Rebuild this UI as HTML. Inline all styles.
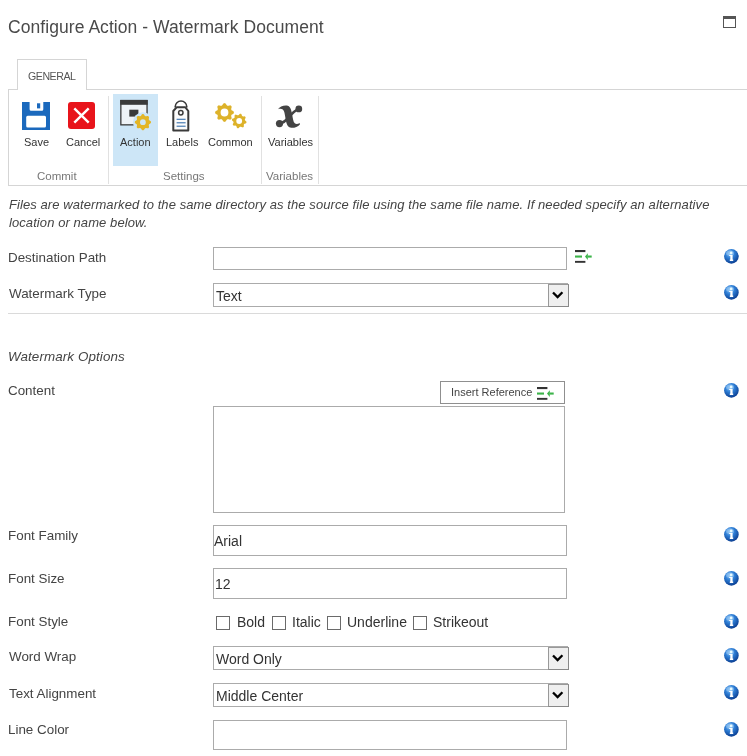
<!DOCTYPE html>
<html><head><meta charset="utf-8">
<style>
html,body{margin:0;padding:0;background:#fff;width:747px;height:756px;overflow:hidden;position:relative;font-family:"Liberation Sans",sans-serif;color:#444}
.a{position:absolute;white-space:nowrap;will-change:transform}
.t13{font-size:13.4px;line-height:13px}
.t11{font-size:11px;line-height:11px}
.t14{font-size:14px;line-height:14px}
.box{position:absolute;border:1px solid #ababab;background:#fff;box-sizing:border-box}
.info{position:absolute;left:724px;width:15px;height:15px}
.dd{position:absolute;left:548px;width:20.5px;height:23px;box-sizing:border-box;background:#efefef;border:1.5px solid #999;border-right:1.5px solid #888;border-bottom:1.5px solid #888}
.cb{position:absolute;top:616px;width:14px;height:14px;box-sizing:border-box;border:1px solid #6a6a6a;background:#fff}
</style></head><body>
<svg width="0" height="0" style="position:absolute">
<defs>
<radialGradient id="ig" cx="40%" cy="30%" r="70%">
<stop offset="0" stop-color="#8cc4f4"/><stop offset="0.45" stop-color="#2f7fd6"/><stop offset="1" stop-color="#0b3f93"/>
</radialGradient>
<symbol id="info" viewBox="0 0 15 15">
<circle cx="7.4" cy="7.4" r="7.3" fill="url(#ig)"/>
<ellipse cx="6" cy="4.2" rx="4" ry="2.6" fill="#bfe2ff" opacity="0.35"/>
<circle cx="7.2" cy="3.9" r="1.35" fill="#e8fbff"/>
<path d="M5.2 5.9H8.6V10.5H9.2V11.9H5.8V10.5H6.3V7H5.2Z" fill="#fff"/>
</symbol>
<symbol id="ref" viewBox="0 0 17 13">
<rect x="0" y="0" width="10.4" height="2.1" fill="#333"/>
<rect x="0" y="5.5" width="7" height="2.1" fill="#3cb44a"/>
<path d="M10 6.55L12.8 3.2V9.9Z" fill="#3cb44a"/>
<rect x="12.6" y="5.5" width="4.1" height="2.1" fill="#3cb44a"/>
<rect x="0" y="10.9" width="10.4" height="1.9" fill="#333"/>
</symbol>
<symbol id="chev" viewBox="0 0 14 10">
<path d="M2 2.5L6.6 7.1L11.4 2.3" stroke="#000" stroke-width="2.3" fill="none" stroke-linejoin="miter" stroke-miterlimit="4"/>
</symbol>
</defs>
</svg>

<!-- Title -->
<div class="a" style="left:8.4px;top:18.6px;font-size:17.5px;line-height:17.5px;letter-spacing:0.06px;color:#4a4a4a">Configure Action - Watermark Document</div>
<!-- maximize icon -->
<div class="a" style="left:723px;top:15.5px;width:13px;height:11.5px;box-sizing:border-box;border:1px solid #555;border-top:3px solid #555"></div>

<!-- Tab -->
<div class="a" style="left:17px;top:59px;width:70px;height:31px;box-sizing:border-box;border:1px solid #d5d5d5;border-bottom:none;background:#fff;z-index:2"></div>
<div class="a" style="left:28.3px;top:71px;font-size:10.6px;line-height:10.6px;letter-spacing:-0.45px;color:#555;z-index:3">GENERAL</div>

<!-- Ribbon -->
<div class="a" style="left:8px;top:89px;width:739px;height:97px;box-sizing:border-box;border:1px solid #d5d5d5;border-right:none"></div>
<div class="a" style="left:108px;top:96px;width:1px;height:88px;background:#e1e1e1"></div>
<div class="a" style="left:261px;top:96px;width:1px;height:88px;background:#e1e1e1"></div>
<div class="a" style="left:318px;top:96px;width:1px;height:88px;background:#e1e1e1"></div>
<div class="a" style="left:113px;top:94px;width:45px;height:72px;background:#cde6f7"></div>

<!-- Save icon -->
<svg class="a" style="left:22px;top:102px" width="28" height="28" viewBox="0 0 28 28">
<path fill="#1b69bd" fill-rule="evenodd" d="M0 0H28V28H0Z M7.6 0H21.3V7.3a1.5 1.5 0 0 1 -1.5 1.5H9.1a1.5 1.5 0 0 1 -1.5 -1.5Z M5.7 13.8H22.5a1.5 1.5 0 0 1 1.5 1.5V24.1a1.5 1.5 0 0 1 -1.5 1.5H5.7a1.5 1.5 0 0 1 -1.5 -1.5V15.3a1.5 1.5 0 0 1 1.5 -1.5Z"/>
<rect x="15" y="1.3" width="3.2" height="5.1" fill="#1b69bd"/>
</svg>
<!-- Cancel icon -->
<svg class="a" style="left:68px;top:102px" width="27" height="27" viewBox="0 0 27 27">
<rect x="0" y="0" width="27" height="27" rx="3" fill="#e8141b"/>
<path d="M6.3 6.3L20.7 20.7M20.7 6.3L6.3 20.7" stroke="#fff" stroke-width="2.4"/>
</svg>
<!-- Action icon -->
<svg class="a" style="left:118px;top:98px" width="36" height="36" viewBox="0 0 36 36">
<rect x="2.85" y="2.5" width="26.2" height="24.35" fill="#eef3f7" stroke="#3a3a3a" stroke-width="1.3"/>
<rect x="2.2" y="2" width="27.5" height="4.8" fill="#3a3a3a"/>
<rect x="11.3" y="11.7" width="9.1" height="6.9" fill="#3a3a3a"/>
<circle cx="24.9" cy="24.2" r="10" fill="#cde6f7"/>
<path fill="#e3b526" fill-rule="evenodd" d="M24.90 16.10 L25.18 16.12 L25.46 16.19 L25.73 16.33 L25.98 16.54 L26.20 16.83 L26.40 17.17 L26.58 17.48 L26.75 17.74 L26.94 17.93 L27.13 18.07 L27.34 18.17 L27.55 18.25 L27.77 18.31 L28.02 18.33 L28.31 18.30 L28.64 18.22 L29.00 18.12 L29.38 18.04 L29.72 18.03 L30.03 18.09 L30.29 18.21 L30.52 18.38 L30.72 18.58 L30.89 18.81 L31.01 19.07 L31.07 19.38 L31.06 19.72 L30.98 20.10 L30.88 20.46 L30.80 20.79 L30.77 21.08 L30.79 21.33 L30.85 21.55 L30.93 21.76 L31.03 21.97 L31.17 22.16 L31.36 22.35 L31.62 22.52 L31.93 22.70 L32.27 22.90 L32.56 23.12 L32.77 23.37 L32.91 23.64 L32.98 23.92 L33.00 24.20 L32.98 24.48 L32.91 24.76 L32.77 25.03 L32.56 25.28 L32.27 25.50 L31.93 25.70 L31.62 25.88 L31.36 26.05 L31.17 26.24 L31.03 26.43 L30.93 26.64 L30.85 26.85 L30.79 27.07 L30.77 27.32 L30.80 27.61 L30.88 27.94 L30.98 28.30 L31.06 28.68 L31.07 29.02 L31.01 29.33 L30.89 29.59 L30.72 29.82 L30.52 30.02 L30.29 30.19 L30.03 30.31 L29.72 30.37 L29.38 30.36 L29.00 30.28 L28.64 30.18 L28.31 30.10 L28.02 30.07 L27.77 30.09 L27.55 30.15 L27.34 30.23 L27.13 30.33 L26.94 30.47 L26.75 30.66 L26.58 30.92 L26.40 31.23 L26.20 31.57 L25.98 31.86 L25.73 32.07 L25.46 32.21 L25.18 32.28 L24.90 32.30 L24.62 32.28 L24.34 32.21 L24.07 32.07 L23.82 31.86 L23.60 31.57 L23.40 31.23 L23.22 30.92 L23.05 30.66 L22.86 30.47 L22.67 30.33 L22.46 30.23 L22.25 30.15 L22.03 30.09 L21.78 30.07 L21.49 30.10 L21.16 30.18 L20.80 30.28 L20.42 30.36 L20.08 30.37 L19.77 30.31 L19.51 30.19 L19.28 30.02 L19.08 29.82 L18.91 29.59 L18.79 29.33 L18.73 29.02 L18.74 28.68 L18.82 28.30 L18.92 27.94 L19.00 27.61 L19.03 27.32 L19.01 27.07 L18.95 26.85 L18.87 26.64 L18.77 26.43 L18.63 26.24 L18.44 26.05 L18.18 25.88 L17.87 25.70 L17.53 25.50 L17.24 25.28 L17.03 25.03 L16.89 24.76 L16.82 24.48 L16.80 24.20 L16.82 23.92 L16.89 23.64 L17.03 23.37 L17.24 23.12 L17.53 22.90 L17.87 22.70 L18.18 22.52 L18.44 22.35 L18.63 22.16 L18.77 21.97 L18.87 21.76 L18.95 21.55 L19.01 21.33 L19.03 21.08 L19.00 20.79 L18.92 20.46 L18.82 20.10 L18.74 19.72 L18.73 19.38 L18.79 19.07 L18.91 18.81 L19.08 18.58 L19.28 18.38 L19.51 18.21 L19.77 18.09 L20.08 18.03 L20.42 18.04 L20.80 18.12 L21.16 18.22 L21.49 18.30 L21.78 18.33 L22.03 18.31 L22.25 18.25 L22.46 18.17 L22.67 18.07 L22.86 17.93 L23.05 17.74 L23.22 17.48 L23.40 17.17 L23.60 16.83 L23.82 16.54 L24.07 16.33 L24.34 16.19 L24.62 16.12ZM22.00 24.20a2.9 2.9 0 1 0 5.8 0a2.9 2.9 0 1 0 -5.8 0Z"/>
</svg>
<!-- Labels icon -->
<svg class="a" style="left:166px;top:96px" width="30" height="40" viewBox="0 0 30 40">
<path d="M9.2 11.5V10.8a5.8 5.8 0 0 1 11.6 0V11.5" fill="none" stroke="#3a3a3a" stroke-width="1.6"/>
<path d="M7.3 34.4V15L10.6 11.3H19.4L22.3 15V34.4Z" fill="#fbfbfb" stroke="#3a3a3a" stroke-width="2" stroke-linejoin="round"/>
<circle cx="14.8" cy="16.7" r="2.2" fill="none" stroke="#3a3a3a" stroke-width="1.5"/>
<rect x="10.6" y="22.7" width="9" height="1.3" fill="#5686b8"/>
<rect x="10.6" y="26.1" width="9" height="1.3" fill="#5686b8"/>
<rect x="10.6" y="29.6" width="9" height="1.3" fill="#5686b8"/>
</svg>
<!-- Common icon -->
<svg class="a" style="left:208px;top:96px" width="44" height="40" viewBox="0 0 44 40">
<path fill="#ddb22a" fill-rule="evenodd" d="M16.50 7.10 L16.83 7.13 L17.15 7.22 L17.46 7.38 L17.74 7.65 L18.00 8.01 L18.22 8.42 L18.42 8.81 L18.62 9.12 L18.82 9.35 L19.04 9.51 L19.27 9.64 L19.51 9.73 L19.77 9.79 L20.06 9.80 L20.40 9.75 L20.79 9.64 L21.22 9.50 L21.67 9.39 L22.08 9.36 L22.44 9.42 L22.76 9.55 L23.03 9.74 L23.26 9.97 L23.45 10.24 L23.58 10.56 L23.64 10.92 L23.61 11.33 L23.50 11.78 L23.36 12.21 L23.25 12.60 L23.20 12.94 L23.21 13.23 L23.27 13.49 L23.36 13.73 L23.49 13.96 L23.65 14.18 L23.88 14.38 L24.19 14.58 L24.58 14.78 L24.99 15.00 L25.35 15.26 L25.62 15.54 L25.78 15.85 L25.87 16.17 L25.90 16.50 L25.87 16.83 L25.78 17.15 L25.62 17.46 L25.35 17.74 L24.99 18.00 L24.58 18.22 L24.19 18.42 L23.88 18.62 L23.65 18.82 L23.49 19.04 L23.36 19.27 L23.27 19.51 L23.21 19.77 L23.20 20.06 L23.25 20.40 L23.36 20.79 L23.50 21.22 L23.61 21.67 L23.64 22.08 L23.58 22.44 L23.45 22.76 L23.26 23.03 L23.03 23.26 L22.76 23.45 L22.44 23.58 L22.08 23.64 L21.67 23.61 L21.22 23.50 L20.79 23.36 L20.40 23.25 L20.06 23.20 L19.77 23.21 L19.51 23.27 L19.27 23.36 L19.04 23.49 L18.82 23.65 L18.62 23.88 L18.42 24.19 L18.22 24.58 L18.00 24.99 L17.74 25.35 L17.46 25.62 L17.15 25.78 L16.83 25.87 L16.50 25.90 L16.17 25.87 L15.85 25.78 L15.54 25.62 L15.26 25.35 L15.00 24.99 L14.78 24.58 L14.58 24.19 L14.38 23.88 L14.18 23.65 L13.96 23.49 L13.73 23.36 L13.49 23.27 L13.23 23.21 L12.94 23.20 L12.60 23.25 L12.21 23.36 L11.78 23.50 L11.33 23.61 L10.92 23.64 L10.56 23.58 L10.24 23.45 L9.97 23.26 L9.74 23.03 L9.55 22.76 L9.42 22.44 L9.36 22.08 L9.39 21.67 L9.50 21.22 L9.64 20.79 L9.75 20.40 L9.80 20.06 L9.79 19.77 L9.73 19.51 L9.64 19.27 L9.51 19.04 L9.35 18.82 L9.12 18.62 L8.81 18.42 L8.42 18.22 L8.01 18.00 L7.65 17.74 L7.38 17.46 L7.22 17.15 L7.13 16.83 L7.10 16.50 L7.13 16.17 L7.22 15.85 L7.38 15.54 L7.65 15.26 L8.01 15.00 L8.42 14.78 L8.81 14.58 L9.12 14.38 L9.35 14.18 L9.51 13.96 L9.64 13.73 L9.73 13.49 L9.79 13.23 L9.80 12.94 L9.75 12.60 L9.64 12.21 L9.50 11.78 L9.39 11.33 L9.36 10.92 L9.42 10.56 L9.55 10.24 L9.74 9.97 L9.97 9.74 L10.24 9.55 L10.56 9.42 L10.92 9.36 L11.33 9.39 L11.78 9.50 L12.21 9.64 L12.60 9.75 L12.94 9.80 L13.23 9.79 L13.49 9.73 L13.73 9.64 L13.96 9.51 L14.18 9.35 L14.38 9.12 L14.58 8.81 L14.78 8.42 L15.00 8.01 L15.26 7.65 L15.54 7.38 L15.85 7.22 L16.17 7.13ZM12.60 16.50a3.9 3.9 0 1 0 7.8 0a3.9 3.9 0 1 0 -7.8 0Z"/>
<path fill="#ddb22a" fill-rule="evenodd" d="M31.20 18.43 L31.44 18.15 L31.69 17.93 L31.96 17.79 L32.22 17.73 L32.48 17.72 L32.74 17.76 L32.98 17.85 L33.21 17.98 L33.42 18.18 L33.58 18.45 L33.71 18.78 L33.81 19.14 L33.90 19.46 L34.01 19.72 L34.14 19.91 L34.28 20.07 L34.44 20.19 L34.62 20.29 L34.82 20.37 L35.05 20.41 L35.33 20.41 L35.66 20.38 L36.03 20.34 L36.39 20.33 L36.70 20.39 L36.96 20.50 L37.16 20.67 L37.33 20.86 L37.47 21.08 L37.56 21.33 L37.60 21.60 L37.56 21.90 L37.45 22.22 L37.28 22.54 L37.10 22.85 L36.97 23.13 L36.89 23.37 L36.87 23.59 L36.88 23.79 L36.92 23.99 L36.99 24.19 L37.09 24.38 L37.26 24.58 L37.49 24.78 L37.77 25.00 L38.05 25.24 L38.27 25.49 L38.41 25.76 L38.47 26.02 L38.48 26.28 L38.44 26.54 L38.35 26.78 L38.22 27.01 L38.02 27.22 L37.75 27.38 L37.42 27.51 L37.06 27.61 L36.74 27.70 L36.48 27.81 L36.29 27.94 L36.13 28.08 L36.01 28.24 L35.91 28.42 L35.83 28.62 L35.79 28.85 L35.79 29.13 L35.82 29.46 L35.86 29.83 L35.87 30.19 L35.81 30.50 L35.70 30.76 L35.53 30.96 L35.34 31.13 L35.12 31.27 L34.87 31.36 L34.60 31.40 L34.30 31.36 L33.98 31.25 L33.66 31.08 L33.35 30.90 L33.07 30.77 L32.83 30.69 L32.61 30.67 L32.41 30.68 L32.21 30.72 L32.01 30.79 L31.82 30.89 L31.62 31.06 L31.42 31.29 L31.20 31.57 L30.96 31.85 L30.71 32.07 L30.44 32.21 L30.18 32.27 L29.92 32.28 L29.66 32.24 L29.42 32.15 L29.19 32.02 L28.98 31.82 L28.82 31.55 L28.69 31.22 L28.59 30.86 L28.50 30.54 L28.39 30.28 L28.26 30.09 L28.12 29.93 L27.96 29.81 L27.78 29.71 L27.58 29.63 L27.35 29.59 L27.07 29.59 L26.74 29.62 L26.37 29.66 L26.01 29.67 L25.70 29.61 L25.44 29.50 L25.24 29.33 L25.07 29.14 L24.93 28.92 L24.84 28.67 L24.80 28.40 L24.84 28.10 L24.95 27.78 L25.12 27.46 L25.30 27.15 L25.43 26.87 L25.51 26.63 L25.53 26.41 L25.52 26.21 L25.48 26.01 L25.41 25.81 L25.31 25.62 L25.14 25.42 L24.91 25.22 L24.63 25.00 L24.35 24.76 L24.13 24.51 L23.99 24.24 L23.93 23.98 L23.92 23.72 L23.96 23.46 L24.05 23.22 L24.18 22.99 L24.38 22.78 L24.65 22.62 L24.98 22.49 L25.34 22.39 L25.66 22.30 L25.92 22.19 L26.11 22.06 L26.27 21.92 L26.39 21.76 L26.49 21.58 L26.57 21.38 L26.61 21.15 L26.61 20.87 L26.58 20.54 L26.54 20.17 L26.53 19.81 L26.59 19.50 L26.70 19.24 L26.87 19.04 L27.06 18.87 L27.28 18.73 L27.53 18.64 L27.80 18.60 L28.10 18.64 L28.42 18.75 L28.74 18.92 L29.05 19.10 L29.33 19.23 L29.57 19.31 L29.79 19.33 L29.99 19.32 L30.19 19.28 L30.39 19.21 L30.58 19.11 L30.78 18.94 L30.98 18.71ZM28.30 25.00a2.9 2.9 0 1 0 5.8 0a2.9 2.9 0 1 0 -5.8 0Z"/>
</svg>
<!-- Variables icon -->
<svg class="a" style="left:270px;top:100px" width="40" height="32" viewBox="0 0 40 32">
<g fill="#444">
<path d="M8 9.2C9.5 6.6 13 5.2 16.6 5.4C20.3 5.7 21.3 9.5 22.1 14C22.9 18.6 23.2 21.9 24.8 23.3C26 24.3 27.8 24.1 29.7 23.1L29.9 24.4C27.7 26.8 24.6 28 21.4 27.8C17.6 27.5 16.5 24.3 15.7 19.6C14.9 14.9 14.5 11 12.8 9.6C11.5 8.6 9.8 8.7 8 9.2Z"/>
<path d="M27.8 9.4C23.5 11.5 21 14.8 18.3 17.8C15.8 20.6 13.6 22.4 10.6 23.4" fill="none" stroke="#444" stroke-width="2.6"/>
<circle cx="28.8" cy="8.9" r="3.4"/>
<circle cx="9.5" cy="23.6" r="3.6"/>
</g>
</svg>

<!-- ribbon labels -->
<div class="a t11" style="left:24px;top:136.7px;color:#333">Save</div>
<div class="a t11" style="left:65.5px;top:136.7px;color:#333">Cancel</div>
<div class="a t11" style="left:120px;top:136.7px;color:#333">Action</div>
<div class="a t11" style="left:166px;top:136.7px;color:#333">Labels</div>
<div class="a t11" style="left:208px;top:136.7px;color:#333">Common</div>
<div class="a t11" style="left:267.5px;top:136.7px;color:#333">Variables</div>
<div class="a" style="left:37.3px;top:170.9px;font-size:11.5px;line-height:11.5px;color:#777">Commit</div>
<div class="a" style="left:162.6px;top:170.9px;font-size:11.5px;line-height:11.5px;color:#777">Settings</div>
<div class="a" style="left:265.8px;top:170.9px;font-size:11.5px;line-height:11.5px;color:#777">Variables</div>

<!-- description -->
<div class="a t13" style="left:9px;top:198px;font-style:italic;letter-spacing:0.08px;font-size:13px">Files are watermarked to the same directory as the source file using the same file name. If needed specify an alternative</div>
<div class="a t13" style="left:9px;top:215.7px;font-style:italic;letter-spacing:0.08px;font-size:13px">location or name below.</div>

<!-- Destination Path -->
<div class="a t13" style="left:8.4px;top:251px">Destination Path</div>
<div class="box" style="left:213px;top:247px;width:354px;height:23px"></div>
<svg class="a" style="left:575px;top:250px" width="17" height="13"><use href="#ref"/></svg>
<svg class="info" style="top:249px"><use href="#info"/></svg>

<!-- Watermark Type -->
<div class="a t13" style="left:9px;top:287px">Watermark Type</div>
<div class="box" style="left:213px;top:283px;width:355px;height:24px"></div>
<div class="a t14" style="left:216px;top:289px;color:#333">Text</div>
<div class="dd" style="top:283.5px"></div>
<svg class="a" style="left:551px;top:289.5px" width="14" height="10"><use href="#chev"/></svg>
<svg class="info" style="top:285px"><use href="#info"/></svg>

<div class="a" style="left:8px;top:313px;width:739px;height:1px;background:#dadada"></div>

<!-- Watermark Options -->
<div class="a t13" style="left:8.4px;top:350px;font-style:italic;letter-spacing:0.1px">Watermark Options</div>

<!-- Content -->
<div class="a t13" style="left:8.4px;top:384px">Content</div>
<div class="box" style="left:440px;top:381px;width:124.5px;height:23px;border-color:#8f8f8f"></div>
<div class="a" style="left:451px;top:386.7px;font-size:11px;line-height:11px;color:#444">Insert Reference</div>
<svg class="a" style="left:537px;top:386.8px" width="17" height="13"><use href="#ref"/></svg>
<div class="box" style="left:213px;top:406px;width:352px;height:107px"></div>
<svg class="info" style="top:383px"><use href="#info"/></svg>

<!-- Font Family -->
<div class="a t13" style="left:8.4px;top:529px">Font Family</div>
<div class="box" style="left:213px;top:525px;width:354px;height:31px"></div>
<div class="a t14" style="left:214px;top:534px;color:#333">Arial</div>
<svg class="info" style="top:527px"><use href="#info"/></svg>

<!-- Font Size -->
<div class="a t13" style="left:8.4px;top:572px">Font Size</div>
<div class="box" style="left:213px;top:568px;width:354px;height:31px"></div>
<div class="a t14" style="left:215px;top:577.2px;color:#333">12</div>
<svg class="info" style="top:570.5px"><use href="#info"/></svg>

<!-- Font Style -->
<div class="a t13" style="left:8.4px;top:615px">Font Style</div>
<div class="cb" style="left:216px"></div>
<div class="a t14" style="left:237px;top:615px;color:#333">Bold</div>
<div class="cb" style="left:271.5px"></div>
<div class="a t14" style="left:291.5px;top:615px;color:#333">Italic</div>
<div class="cb" style="left:326.5px"></div>
<div class="a t14" style="left:347px;top:615px;color:#333">Underline</div>
<div class="cb" style="left:412.5px"></div>
<div class="a t14" style="left:432.5px;top:615px;color:#333">Strikeout</div>
<svg class="info" style="top:614px"><use href="#info"/></svg>

<!-- Word Wrap -->
<div class="a t13" style="left:9px;top:650px">Word Wrap</div>
<div class="box" style="left:213px;top:646px;width:355px;height:24px"></div>
<div class="a t14" style="left:216px;top:652px;color:#333">Word Only</div>
<div class="dd" style="top:646.5px"></div>
<svg class="a" style="left:551px;top:652.5px" width="14" height="10"><use href="#chev"/></svg>
<svg class="info" style="top:648px"><use href="#info"/></svg>

<!-- Text Alignment -->
<div class="a t13" style="left:9px;top:686.5px">Text Alignment</div>
<div class="box" style="left:213px;top:683px;width:355px;height:24px"></div>
<div class="a t14" style="left:216px;top:689px;color:#333">Middle Center</div>
<div class="dd" style="top:683.5px"></div>
<svg class="a" style="left:551px;top:689.5px" width="14" height="10"><use href="#chev"/></svg>
<svg class="info" style="top:685px"><use href="#info"/></svg>

<!-- Line Color -->
<div class="a t13" style="left:8.4px;top:723px">Line Color</div>
<div class="box" style="left:213px;top:720px;width:354px;height:30px"></div>
<svg class="info" style="top:722px"><use href="#info"/></svg>

</body></html>
